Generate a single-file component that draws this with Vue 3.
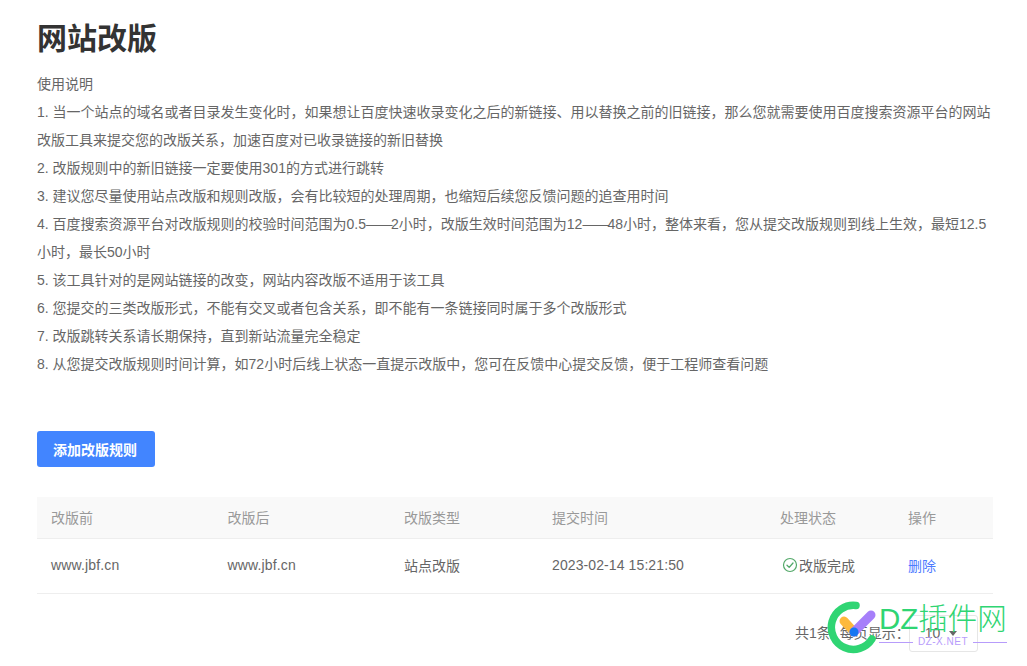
<script setup>
const lines = [
  '使用说明',
  '1. 当一个站点的域名或者目录发生变化时，如果想让百度快速收录变化之后的新链接、用以替换之前的旧链接，那么您就需要使用百度搜索资源平台的网站改版工具来提交您的改版关系，加速百度对已收录链接的新旧替换',
  '2. 改版规则中的新旧链接一定要使用301的方式进行跳转',
  '3. 建议您尽量使用站点改版和规则改版，会有比较短的处理周期，也缩短后续您反馈问题的追查用时间',
  '4. 百度搜索资源平台对改版规则的校验时间范围为0.5——2小时，改版生效时间范围为12——48小时，整体来看，您从提交改版规则到线上生效，最短12.5',
  '小时，最长50小时',
  '5. 该工具针对的是网站链接的改变，网站内容改版不适用于该工具',
  '6. 您提交的三类改版形式，不能有交叉或者包含关系，即不能有一条链接同时属于多个改版形式',
  '7. 改版跳转关系请长期保持，直到新站流量完全稳定',
  '8. 从您提交改版规则时间计算，如72小时后线上状态一直提示改版中，您可在反馈中心提交反馈，便于工程师查看问题'
]
const headers = ['改版前', '改版后', '改版类型', '提交时间', '处理状态', '操作']
</script>

<template>
  <div class="page">
    <h1 class="title">网站改版</h1>
    <div class="notes">
      <p v-for="line in lines" :key="line">
        <template v-for="(part, i) in line.split('——')" :key="i"><span v-if="i" class="dash">——</span>{{ part }}</template>
      </p>
    </div>
    <button class="add">添加改版规则</button>
    <div class="table">
      <div class="row head">
        <div v-for="h in headers" :key="h" class="cell">{{ h }}</div>
      </div>
      <div class="row body">
        <div class="cell latin">www.jbf.cn</div>
        <div class="cell latin">www.jbf.cn</div>
        <div class="cell">站点改版</div>
        <div class="cell date">2023-02-14 15:21:50</div>
        <div class="cell status">
          <svg width="16" height="16" viewBox="0 0 16 16" fill="none">
            <circle cx="8" cy="8" r="6.5" stroke="#52a868" stroke-width="1.2" />
            <path d="M5 8.2 7.2 10.4 11 6" stroke="#52a868" stroke-width="1.3" stroke-linecap="round" stroke-linejoin="round" />
          </svg>
          <span>改版完成</span>
        </div>
        <div class="cell link">删除</div>
      </div>
    </div>
    <div class="pager">
      <span class="total">共1条</span>
      <span class="per">每页显示：</span>
      <div class="select"><span>10</span><i class="caret"></i></div>
    </div>
    <div class="mark">
      <svg class="logo" width="54" height="54" viewBox="0 0 54 54" fill="none">
        <path d="M30 5.5A22 22 0 1 0 46 39" stroke="#2fd573" stroke-width="7.5" stroke-linecap="round" />
        <path d="M18 21 28 32" stroke="#fdb93d" stroke-width="9" stroke-linecap="round" />
        <path d="M28 32 45 15" stroke="#a67ffa" stroke-width="9" stroke-linecap="round" />
        <circle cx="28" cy="32" r="4.5" fill="#1677f2" />
      </svg>
      <div class="brand">
        <div class="brand-name">DZ插件网</div>
        <div class="brand-sub"><i></i><span>DZ-X.NET</span><i></i></div>
      </div>
    </div>
  </div>
</template>

<style>
html, body { margin: 0; background: #fff; }
</style>

<style scoped>
.page {
  position: relative;
  box-sizing: border-box;
  width: 1027px;
  height: 666px;
  overflow: hidden;
  padding: 15px 34px 0 37px;
  font-family: "Liberation Sans", "Noto Sans CJK SC", sans-serif;
  font-size: 14px;
  color: #666;
}
.title {
  margin: 0 0 13px;
  font-size: 30px;
  line-height: 42px;
  font-weight: 700;
  color: #333;
  font-family: "Noto Sans CJK SC", sans-serif;
}
.notes p {
  margin: 0;
  line-height: 28px;
}
.dash {
  letter-spacing: -1.5px;
}
.add {
  display: block;
  margin-top: 53px;
  width: 118px;
  height: 36px;
  border: 0;
  border-radius: 3px;
  background: #4285ff;
  color: #fff;
  font: 700 14px "Noto Sans CJK SC", sans-serif;
  padding: 0 2px 0 0;
}
.table {
  margin-top: 30px;
}
.row {
  display: grid;
  grid-template-columns: 176.5px 176.5px 148px 228px 128px 99px;
  align-items: center;
  border-bottom: 1px solid #eee;
}
.head {
  height: 41px;
  background: #f9f9f9;
  color: #999;
}
.body {
  height: 54px;
}
.cell {
  padding: 0 0 2px 14px;
}
.latin {
  letter-spacing: 0.15px;
}
.date {
  letter-spacing: 0.1px;
}
.status {
  display: flex;
  align-items: center;
  gap: 1px;
  padding-left: 16px;
}
.link {
  color: #4e7bff;
}
.pager {
  display: flex;
  align-items: center;
  margin-top: 21px;
  padding-left: 758px;
  color: #666;
  line-height: 37px;
}
.total {
  margin-right: 9px;
}
.per {
  width: 69px;
  white-space: nowrap;
}
.select {
  box-sizing: border-box;
  width: 69px;
  height: 37px;
  border: 1px solid #e6e6e6;
  border-radius: 3px;
  display: flex;
  align-items: center;
  padding-left: 15px;
  gap: 9px;
  color: #666;
}
.caret {
  width: 0;
  height: 0;
  border-left: 4px solid transparent;
  border-right: 4px solid transparent;
  border-top: 5px solid #666;
}
.mark {
  position: absolute;
  left: 826px;
  top: 600px;
  display: flex;
  align-items: flex-start;
}
.logo {
  flex: none;
}
.brand {
  margin-left: -1px;
  width: 128px;
}
.brand-name {
  font-family: "Liberation Sans", "Noto Sans CJK SC", sans-serif;
  font-size: 29.5px;
  font-weight: 300;
  line-height: 34px;
  color: #2fd573;
  white-space: nowrap;
  margin-top: 2px;
}
.brand-sub {
  display: flex;
  align-items: center;
  gap: 5px;
  font-family: "Liberation Sans", sans-serif;
  font-size: 10px;
  line-height: 12px;
  letter-spacing: 0.5px;
  color: #b79cfb;
  white-space: nowrap;
}
.brand-sub i {
  flex: 1;
  height: 1px;
  background: #b79cfb;
}
</style>
